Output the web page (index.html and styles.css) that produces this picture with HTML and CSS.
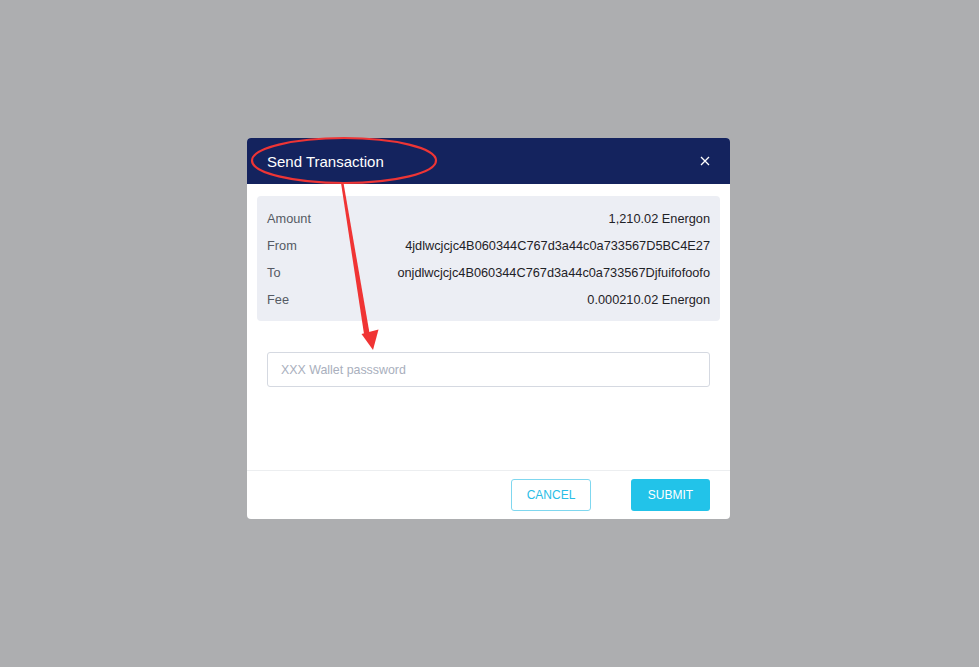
FILE: index.html
```html
<!DOCTYPE html>
<html>
<head>
<meta charset="utf-8">
<link rel="stylesheet" href="styles.css">
</head>
<body>
<div class="overlay">
  <div class="modal">
    <div class="modal-header">
      <span class="title">Send Transaction</span>
      <span class="close">
        <svg width="10" height="10" viewBox="0 0 10 10"><path d="M1 1L9 9M9 1L1 9" stroke="#fff" stroke-width="1.3" fill="none"/></svg>
      </span>
    </div>
    <div class="modal-body">
      <div class="info">
        <div class="row"><span class="label">Amount</span><span class="value">1,210.02 Energon</span></div>
        <div class="row"><span class="label">From</span><span class="value">4jdlwcjcjc4B060344C767d3a44c0a733567D5BC4E27</span></div>
        <div class="row"><span class="label">To</span><span class="value">onjdlwcjcjc4B060344C767d3a44c0a733567Djfuifofoofo</span></div>
        <div class="row"><span class="label">Fee</span><span class="value">0.000210.02 Energon</span></div>
      </div>
      <div class="field">
        <input class="password" type="password" placeholder="XXX Wallet passsword">
      </div>
    </div>
    <div class="modal-footer">
      <button class="btn btn-cancel">CANCEL</button>
      <button class="btn btn-submit">SUBMIT</button>
    </div>
  </div>
  <svg class="annotation" width="979" height="667" viewBox="0 0 979 667">
    <ellipse cx="344" cy="160.5" rx="92" ry="22.5" fill="none" stroke="#ee3535" stroke-width="2.2"/>
    <polygon points="341,183 343.5,183 369.5,333 364,334" fill="#f03434"/>
    <polygon points="361.5,334 378.5,329.5 373,350" fill="#f03434"/>
  </svg>
</div>
</body>
</html>
```
FILE: styles.css
```css
html, body {
  margin: 0;
  padding: 0;
  width: 100%;
  height: 100%;
}
body {
  background: #adaeb0;
  font-family: "Liberation Sans", Arial, sans-serif;
}
.overlay {
  position: relative;
  width: 979px;
  height: 667px;
  display: flex;
  justify-content: flex-start;
  padding: 138px 0 0 247px;
  box-sizing: border-box;
}
.modal {
  width: 483px;
  height: 381px;
  background: #fff;
  border-radius: 4px;
  overflow: hidden;
  display: flex;
  flex-direction: column;
}
.modal-header {
  height: 46px;
  background: #14235e;
  display: flex;
  align-items: center;
  justify-content: space-between;
  padding: 0 20px;
  flex-shrink: 0;
}
.title {
  color: #fff;
  font-size: 15px;
}
.close {
  display: flex;
}
.modal-body {
  flex: 1;
  padding: 12px 10px 0;
}
.info {
  background: #eceef4;
  border-radius: 4px;
  padding: 9px 10px 8px;
  display: flex;
  flex-direction: column;
}
.row {
  display: flex;
  justify-content: space-between;
  align-items: center;
  height: 27px;
  font-size: 12.75px;
}
.label {
  color: #555a63;
}
.value {
  color: #1f2227;
}
.field {
  padding: 31px 10px 0;
}
.password {
  width: 100%;
  height: 35px;
  box-sizing: border-box;
  border: 1px solid #d5d9e1;
  border-radius: 3px;
  padding: 0 13px;
  font-family: "Liberation Sans", Arial, sans-serif;
  font-size: 12.4px;
  outline: none;
}
.password::placeholder {
  color: #a9afbd;
}
.modal-footer {
  height: 49px;
  border-top: 1px solid #eceef0;
  display: flex;
  align-items: flex-start;
  justify-content: flex-end;
  padding: 8px 20px 0;
  gap: 40px;
  box-sizing: border-box;
  flex-shrink: 0;
}
.btn {
  width: 80px;
  height: 32px;
  border-radius: 3px;
  font-family: "Liberation Sans", Arial, sans-serif;
  font-size: 12px;
  cursor: pointer;
  padding: 0;
}
.btn-cancel {
  background: #fff;
  border: 1px solid #7fd7ef;
  color: #28bde6;
}
.btn-submit {
  width: 79px;
  background: #22c3e9;
  border: none;
  color: #fff;
}
.annotation {
  position: absolute;
  left: 0;
  top: 0;
  pointer-events: none;
}
```
